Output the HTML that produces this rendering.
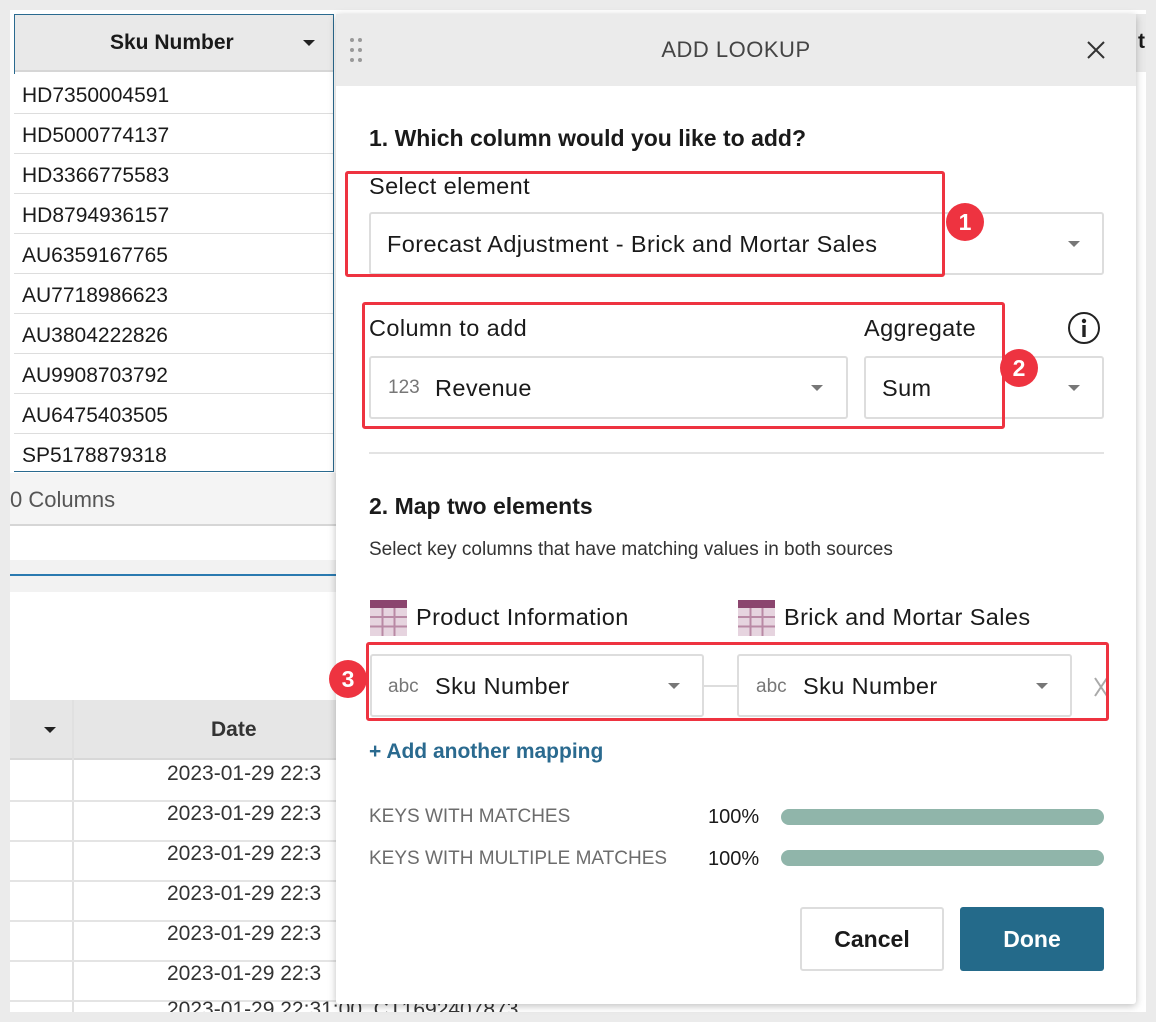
<!DOCTYPE html>
<html><head><meta charset="utf-8"><style>
*{box-sizing:border-box;margin:0;padding:0}
body{width:1156px;height:1022px;background:#ebebeb;font-family:"Liberation Sans",sans-serif;position:relative;overflow:hidden;color:#1a1a1a}
.a{position:absolute}
.row{position:absolute;left:14px;width:319px;height:40px;border-bottom:1px solid #ddd;font-size:21px;padding:10px 0 0 8px;background:#fff}
.drow{position:absolute;left:10px;width:326px;height:40px;border-bottom:2px solid #e4e4e4;background:#fff}
.drow span{position:absolute;left:157px;top:0px;font-size:21px;color:#333}
.lbl{position:absolute;font-size:23.5px;letter-spacing:.4px;color:#1a1a1a}
.sel{position:absolute;background:#fff;border:2px solid #ddd;border-radius:3px}
.tri{position:absolute;width:0;height:0;border-left:6px solid transparent;border-right:6px solid transparent;border-top:6px solid #777}
.red{position:absolute;border:3px solid #ee3340;border-radius:3px}
.badge{position:absolute;width:38px;height:38px;border-radius:50%;background:#ee3340;color:#fff;font-weight:bold;font-size:23px;text-align:center;line-height:38px}
.gray{color:#777}
.key{position:absolute;font-size:19px;color:#6c6c6c;left:369px}
.pct{position:absolute;font-size:20px;left:708px}
.bar{position:absolute;left:781px;width:323px;height:16px;border-radius:8px;background:#90b5aa}
</style></head><body>
<div class="a" style="left:10px;top:10px;width:1136px;height:1002px;background:#fff"></div>
<div class="a" style="left:14px;top:14px;width:320px;height:458px;border:1px solid #2a6a8f;background:#fff"></div>
<div class="a" style="left:15px;top:15px;width:318px;height:57px;background:#e9e9e9;border-bottom:2px solid #d6d6d6"></div>
<div class="a" style="left:110px;top:31px;font-size:21px;font-weight:bold">Sku Number</div>
<div class="tri" style="left:303px;top:40px;border-top-color:#222"></div>
<div class="row" style="top:74px">HD7350004591</div>
<div class="row" style="top:114px">HD5000774137</div>
<div class="row" style="top:154px">HD3366775583</div>
<div class="row" style="top:194px">HD8794936157</div>
<div class="row" style="top:234px">AU6359167765</div>
<div class="row" style="top:274px">AU7718986623</div>
<div class="row" style="top:314px">AU3804222826</div>
<div class="row" style="top:354px">AU9908703792</div>
<div class="row" style="top:394px">AU6475403505</div>
<div class="row" style="top:434px;border-bottom:none;height:37px">SP5178879318</div>
<div class="a" style="left:10px;top:473px;width:326px;height:53px;background:#f4f4f4;border-bottom:2px solid #d6d6d6"></div>
<div class="a" style="left:10px;top:487px;font-size:22px;color:#555">0 Columns</div>
<div class="a" style="left:10px;top:560px;width:326px;height:32px;background:#f2f2f2"></div>
<div class="a" style="left:10px;top:574px;width:326px;height:2px;background:#2a7ab0"></div>
<div class="a" style="left:10px;top:700px;width:326px;height:60px;background:#e6e6e6;border-bottom:2px solid #d8d8d8"></div>
<div class="a" style="left:72px;top:700px;width:2px;height:312px;background:#e0e0e0"></div>
<div class="tri" style="left:44px;top:727px;border-top-color:#222"></div>
<div class="a" style="left:211px;top:718px;font-size:21px;font-weight:bold;color:#333">Date</div>
<div class="drow" style="top:762px;background:transparent"><span>2023-01-29 22:3</span></div>
<div class="drow" style="top:802px;background:transparent"><span>2023-01-29 22:3</span></div>
<div class="drow" style="top:842px;background:transparent"><span>2023-01-29 22:3</span></div>
<div class="drow" style="top:882px;background:transparent"><span>2023-01-29 22:3</span></div>
<div class="drow" style="top:922px;background:transparent"><span>2023-01-29 22:3</span></div>
<div class="drow" style="top:962px;background:transparent"><span>2023-01-29 22:3</span></div>
<div class="a" style="left:167px;top:998px;font-size:21px;color:#333;white-space:nowrap;height:14px;overflow:hidden">2023-01-29 22:31:00 &nbsp;CT1692407873</div>
<div class="a" style="left:1136px;top:14px;width:10px;height:58px;background:#e9e9e9"></div>
<div class="a" style="left:1138px;top:30px;font-size:21px;font-weight:bold">t</div>
<div class="a" style="left:336px;top:14px;width:800px;height:990px;background:#fff;box-shadow:0 2px 8px rgba(0,0,0,.25);border-radius:3px"></div>
<div class="a" style="left:336px;top:14px;width:800px;height:72px;background:#ebebeb"></div>
<svg class="a" style="left:349px;top:37px" width="14" height="26"><g fill="#999"><circle cx="3" cy="3" r="2"/><circle cx="11" cy="3" r="2"/><circle cx="3" cy="13" r="2"/><circle cx="11" cy="13" r="2"/><circle cx="3" cy="23" r="2"/><circle cx="11" cy="23" r="2"/></g></svg>
<div class="a" style="left:336px;width:800px;top:37px;text-align:center;font-size:22px;color:#444;letter-spacing:.5px">ADD LOOKUP</div>
<svg class="a" style="left:1086px;top:40px" width="20" height="20"><path d="M2 2L18 18M18 2L2 18" stroke="#333" stroke-width="2"/></svg>

<div class="a" style="left:369px;top:125px;font-size:23px;font-weight:bold">1. Which column would you like to add?</div>
<div class="lbl" style="left:369px;top:173px">Select element</div>
<div class="sel" style="left:369px;top:212px;width:735px;height:63px"></div>
<div class="lbl" style="left:387px;top:231px">Forecast Adjustment - Brick and Mortar Sales</div>
<div class="tri" style="left:1068px;top:241px"></div>
<div class="red" style="left:345px;top:171px;width:600px;height:106px"></div>
<div class="badge" style="left:946px;top:203px">1</div>

<div class="lbl" style="left:369px;top:315px">Column to add</div>
<div class="lbl" style="left:864px;top:315px">Aggregate</div>
<svg class="a" style="left:1067px;top:311px" width="34" height="34"><circle cx="17" cy="17" r="15" fill="none" stroke="#222" stroke-width="2"/><circle cx="17" cy="10" r="2.2" fill="#222"/><rect x="15.3" y="14" width="3.4" height="12" fill="#222"/></svg>
<div class="sel" style="left:369px;top:356px;width:479px;height:63px"></div>
<div class="a gray" style="left:388px;top:377px;font-size:19px">123</div>
<div class="lbl" style="left:435px;top:375px">Revenue</div>
<div class="tri" style="left:811px;top:385px"></div>
<div class="sel" style="left:864px;top:356px;width:240px;height:63px"></div>
<div class="lbl" style="left:882px;top:375px">Sum</div>
<div class="tri" style="left:1068px;top:385px"></div>
<div class="red" style="left:362px;top:302px;width:643px;height:127px"></div>
<div class="badge" style="left:1000px;top:349px">2</div>

<div class="a" style="left:369px;top:452px;width:735px;height:2px;background:#e3e3e3"></div>
<div class="a" style="left:369px;top:493px;font-size:23px;font-weight:bold">2. Map two elements</div>
<div class="a" style="left:369px;top:539px;font-size:19px;color:#333">Select key columns that have matching values in both sources</div>

<svg class="a" style="left:370px;top:600px" width="37" height="36"><rect width="37" height="36" fill="#e6d4df"/><rect width="37" height="8" fill="#8b456e"/><g stroke="#b98aa5" stroke-width="2"><path d="M12.5 8V36M24.5 8V36M0 17H37M0 26.5H37"/></g></svg>
<div class="lbl" style="left:416px;top:604px">Product Information</div>
<svg class="a" style="left:738px;top:600px" width="37" height="36"><rect width="37" height="36" fill="#e6d4df"/><rect width="37" height="8" fill="#8b456e"/><g stroke="#b98aa5" stroke-width="2"><path d="M12.5 8V36M24.5 8V36M0 17H37M0 26.5H37"/></g></svg>
<div class="lbl" style="left:784px;top:604px">Brick and Mortar Sales</div>

<div class="a" style="left:703px;top:685px;width:34px;height:2px;background:#ddd"></div>
<div class="sel" style="left:370px;top:654px;width:334px;height:63px"></div>
<div class="a gray" style="left:388px;top:676px;font-size:19px">abc</div>
<div class="lbl" style="left:435px;top:673px">Sku Number</div>
<div class="tri" style="left:668px;top:683px"></div>
<div class="sel" style="left:737px;top:654px;width:335px;height:63px"></div>
<div class="a gray" style="left:756px;top:676px;font-size:19px">abc</div>
<div class="lbl" style="left:803px;top:673px">Sku Number</div>
<div class="tri" style="left:1036px;top:683px"></div>
<svg class="a" style="left:1094px;top:677px" width="14" height="20"><path d="M1 1L13 19M13 1L1 19" stroke="#aaa" stroke-width="2"/></svg>
<div class="red" style="left:366px;top:642px;width:743px;height:79px"></div>
<div class="badge" style="left:329px;top:660px">3</div>

<div class="a" style="left:369px;top:740px;font-size:21px;color:#2a6a8f;font-weight:bold">+ Add another mapping</div>

<div class="key" style="top:806px">KEYS WITH MATCHES</div>
<div class="pct" style="top:806px">100%</div>
<div class="bar" style="top:809px"></div>
<div class="key" style="top:848px">KEYS WITH MULTIPLE MATCHES</div>
<div class="pct" style="top:848px">100%</div>
<div class="bar" style="top:850px"></div>

<div class="a" style="left:800px;top:907px;width:144px;height:64px;border:2px solid #ddd;border-radius:3px;text-align:center;line-height:60px;font-size:23px;font-weight:bold">Cancel</div>
<div class="a" style="left:960px;top:907px;width:144px;height:64px;background:#246a8a;border-radius:3px;text-align:center;line-height:64px;font-size:23px;font-weight:bold;color:#fff">Done</div>
</body></html>
